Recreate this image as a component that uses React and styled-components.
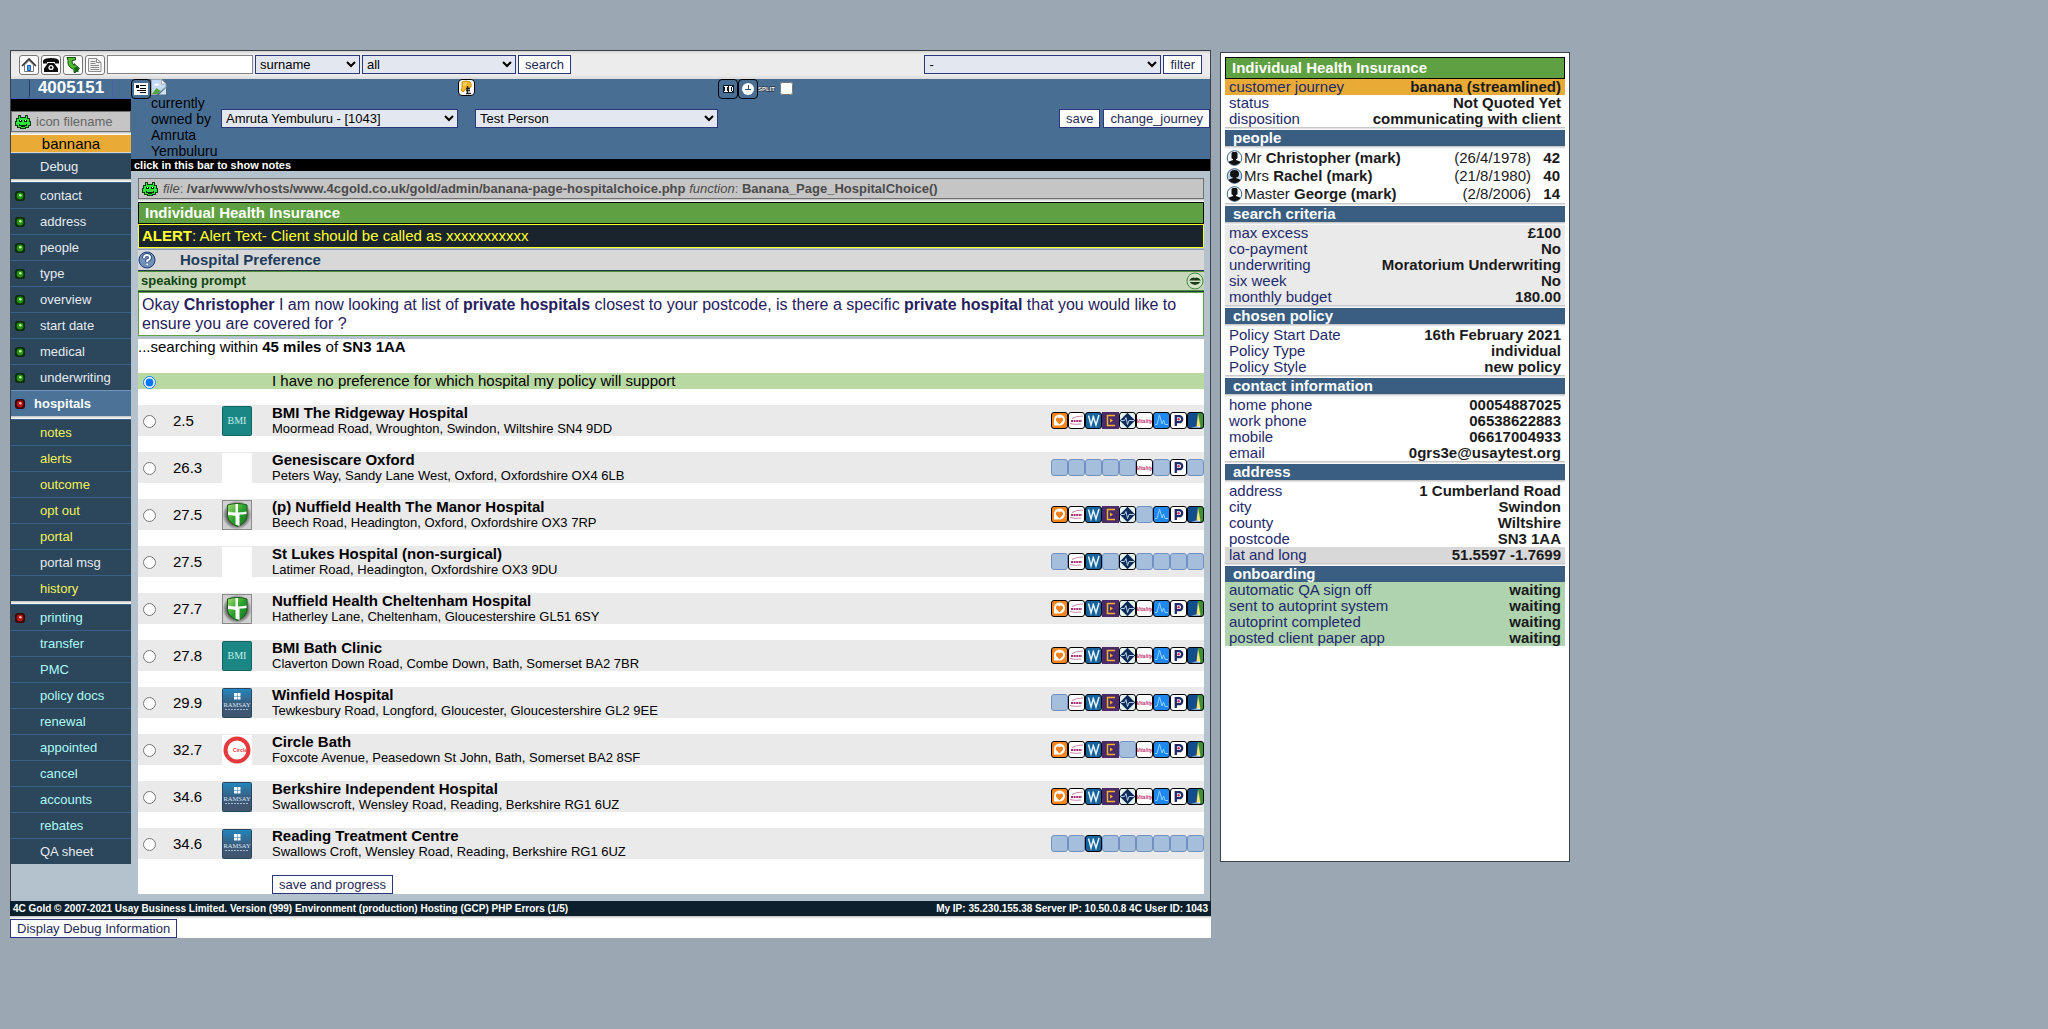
import React from 'react';
import styled, { createGlobalStyle, css } from 'styled-components';

const GlobalStyle = createGlobalStyle`
  * { box-sizing: border-box; }
  body {
    margin: 0;
    background: #9ba7b3;
    color: #000;
    font: 15px/16px "Liberation Sans", Arial, sans-serif;
  }
  ul, dl, dd, h1, h2, p { margin: 0; padding: 0; }
  ul { list-style: none; }
  svg { display: block; flex: none; }
`;

/* ---------- layout ---------- */

const Page = styled.div`
  display: flex;
  align-items: flex-start;
  gap: 9px;
  padding: 50px 10px 0;
`;

const MainColumn = styled.div`
  flex: 0 1 1201px;
  min-width: 0;
`;

const Frame = styled.div`
  border: 1px solid #3c4248;
  border-bottom: 0;
  background: #b4c2cd;
`;

const Workspace = styled.div`
  display: grid;
  grid-template-columns: 120px minmax(0, 1fr);
`;

const Divider = styled.div`
  height: 3px;
  background: linear-gradient(#bcbcbc, #f2f2f2 70%, #fff);
`;

/* ---------- controls ---------- */

const controlBase = css`
  height: 19px;
  border: 1px solid #2a377d;
  border-radius: 0;
  font: 13px/15px "Liberation Sans", Arial, sans-serif;
`;

const Button = styled.button`
  ${controlBase}
  padding: 0 6px;
  background: #fff;
  color: #1f2a55;
  white-space: nowrap;
`;

const Select = styled.select`
  ${controlBase}
  width: ${(p) => p.$width};
  padding: 0;
  background: #e3e8f0;
  color: #000;
`;

const TextBox = styled.input`
  ${controlBase}
  width: 146px;
  border-color: #858585;
  background: #fff;
`;

const Spacer = styled.span`
  flex: 1;
`;

const TopBar = styled.div`
  display: flex;
  align-items: center;
  gap: 2px;
  height: 28px;
  padding: 0 8px 1px;
  background: linear-gradient(#d2d2d2, #ececec 3px, #ececec 24px, #dadada);
`;

const IconButton = styled.button`
  display: grid;
  place-items: center;
  width: 20px;
  height: 20px;
  padding: 0;
  border: 1px solid #777;
  border-radius: 3px;
  background: #fdfdfd;
`;

/* ---------- left navigation ---------- */

const Reference = styled.div`
  display: flex;
  justify-content: space-between;
  height: 20px;
  background: #486f93;
  color: #fff;
  font-weight: bold;
  font-size: 17px;
  line-height: 18px;
  border-bottom: 1px solid #4460ac;
`;

const Notch = styled.span`
  width: 19px;
  border: 1px solid ${(p) => p.$color};
  border-width: ${(p) => p.$edges};
  border-radius: 3px;
`;

const BlackStrip = styled.div`
  height: 12px;
  background: #000;
`;

const FileTag = styled.div`
  display: flex;
  align-items: center;
  gap: 5px;
  height: 21px;
  padding: 0 3px;
  border: 1px solid #707070;
  background: #c5c5c5;
  color: #666;
  font-size: 13px;
  white-space: nowrap;

  b, i { color: #4b4b4b; }
`;

const Journey = styled.div`
  height: 18px;
  border-bottom: 1px solid #dcd8c8;
  background: #e9ab35;
  text-align: center;
  line-height: 18px;
`;

const tones = { plain: '#e4ebf0', yellow: '#f2f25a', cyan: '#adfaf6', active: '#fff' };

const NavLink = styled.a`
  display: flex;
  align-items: center;
  gap: ${(p) => (p.$tone === 'active' ? '8px' : '14px')};
  height: 26px;
  padding-left: 3px;
  border-top: 1px solid ${(p) => (p.$tone === 'active' ? '#6f95b8' : '#386088')};
  background: ${(p) => (p.$tone === 'active' ? '#4b7297' : '#2c465c')};
  color: ${(p) => tones[p.$tone]};
  font-size: 13px;
  font-weight: ${(p) => (p.$tone === 'active' ? 'bold' : 'normal')};
  text-decoration: none;
`;

const LightSlot = styled.span`
  width: 12px;
`;

/* ---------- client header ---------- */

const ClientHeader = styled.div`
  display: flex;
  height: 80px;
  background: #486f93;
`;

const Owner = styled.div`
  width: 70px;
  font-size: 14px;
  line-height: 16px;
`;

const HeaderSelect = styled.div`
  width: ${(p) => p.$width};
  padding-top: 30px;
`;

const HeaderIcons = styled.div`
  display: flex;
  align-items: flex-start;
`;

const SquareIcon = styled.button`
  display: grid;
  place-items: center;
  width: ${(p) => p.$size};
  height: ${(p) => p.$size};
  padding: 0;
  border: 1px solid #000;
  border-radius: 4px;
  background: ${(p) => p.$bg};
`;

const SplitCheck = styled.input`
  width: 13px;
  height: 13px;
  margin: 3px 4px;
`;

const HeaderActions = styled.div`
  display: flex;
  gap: 3px;
  margin-left: auto;
  padding-top: 30px;
`;

const NotesBar = styled.div`
  height: 12px;
  padding-left: 3px;
  background: #000;
  color: #fff;
  font-weight: bold;
  font-size: 11px;
  line-height: 12px;
`;

/* ---------- main content ---------- */

const Content = styled.main`
  padding: 7px 6px 7px 7px;
`;

const GreenTitle = styled.h1`
  height: 22px;
  padding-left: 6px;
  border: 1px solid #000;
  background: #5fa042;
  color: #fff;
  font-size: 15px;
  line-height: 20px;
`;

const Alert = styled.p`
  height: 24px;
  padding-left: 3px;
  border: 1px solid #ffff28;
  background: #1a242c;
  color: #ffff2e;
  line-height: 22px;
`;

const SectionTitle = styled.h2`
  display: flex;
  align-items: center;
  gap: 24px;
  height: 22px;
  margin-top: 1px;
  padding-bottom: 1px;
  border: solid #8d9bab;
  border-width: 1px 0;
  background: #d8d8d8;
  color: #203c5c;
  font-size: 15px;
`;

const PromptTitle = styled.div`
  display: flex;
  align-items: center;
  justify-content: space-between;
  height: 20px;
  margin-bottom: 1px;
  padding-left: 3px;
  border: solid #4f9038;
  border-width: 1px 0;
  box-shadow: 0 -1px #24384a, 0 1px #24384a;
  background: #c7d7ba;
  color: #0f4410;
  font-size: 13px;
  font-weight: bold;
`;

const Prompt = styled.p`
  padding: 2px 3px;
  border: 1px solid #5fa042;
  background: #fff;
  color: #26215c;
  font-size: 16px;
  line-height: 19px;
`;

const Results = styled.form`
  display: flex;
  flex-direction: column;
  align-items: stretch;
  gap: 16px;
  margin-top: 3px;
  background: #fff;
`;

const Searching = styled.p`
  height: 18px;
`;

const Row = styled.label`
  display: grid;
  grid-template-columns: 35px 49px 50px minmax(0, 1fr) auto;
  align-items: center;
  min-height: ${(p) => (p.$chosen ? '16px' : '31px')};
  background: ${(p) => (p.$chosen ? '#b8d9a2' : '#eaeaea')};
`;

const Radio = styled.input`
  width: 13px;
  height: 13px;
  margin: 2px 0 0 5px;
`;

const HospitalName = styled.b`
  display: block;
`;

const HospitalAddress = styled.span`
  display: block;
  font-size: 13px;
  line-height: 15px;
`;

const Providers = styled.span`
  display: flex;
`;

const SubmitRow = styled.div`
  padding-left: 134px;
`;

const Footer = styled.footer`
  display: flex;
  justify-content: space-between;
  height: 15px;
  padding: 0 3px;
  background: #0b1f2c;
  color: #fff;
  font-size: 10px;
  font-weight: bold;
  line-height: 15px;
`;

const DebugBar = styled.div`
  height: 19px;
  background: #fff;
`;

/* ---------- right summary ---------- */

const Summary = styled.aside`
  flex: 0 1 350px;
  min-width: 0;
  min-height: 810px;
  margin-top: 2px;
  padding: 4px;
  border: 1px solid #3c4248;
  background: #fff;
  color: #1a1a1a;
`;

const GroupTitle = styled.h2`
  height: 16px;
  padding-left: 8px;
  background: #395e82;
  color: #fff;
  font-size: 15px;
  line-height: 16px;
`;

const Facts = styled.dl`
  background: ${(p) => p.$bg};
`;

const Fact = styled.div`
  display: flex;
  justify-content: space-between;
  padding: 0 4px;
  background: ${(p) => p.$bg};

  dt { color: #1f2a6c; }
  dd { font-weight: bold; }
`;

const Person = styled.li`
  display: grid;
  grid-template-columns: 18px minmax(0, 1fr) auto 29px;
  align-items: center;
  height: 18px;
  padding: 0 5px 0 1px;

  strong:last-child { text-align: right; }
`;

/* ---------- drawings ---------- */

const Invader = () => (
  <svg width="16" height="14" viewBox="0 0 16 14" shapeRendering="crispEdges">
    <path fill="#0a3d10" d="M3 0h3v2h4V0h3v3h2v3h1v5h-2v2h-3v1H5v-1H2v-2H0V6h1V3h2z" />
    <path fill="#2fe23c" d="M4 1h1v2h6V1h1v3h2v3h1v3h-2v2h-3v1H6v-1H3v-2H1V7h1V4h2z" />
    <path fill="#06240a" d="M4 5h3v2H4zM9 5h3v2H9zM4 9h1v1h6V9h1v2h-2v1H6v-1H4z" />
    <path fill="#fff" d="M5 5h1v1H5zM10 5h1v1h-1z" />
  </svg>
);

const Light = ({ color }) => {
  const [dark, mid, hi] = color === 'red' ? ['#3a0505', '#b01818', '#ffb0b0'] : ['#0b2c08', '#2a8f18', '#b8ff90'];
  return (
    <svg width="12" height="12" viewBox="0 0 12 12">
      <rect x="1" y="1" width="10" height="10" rx="3" fill={dark} />
      <circle cx="6" cy="6" r="3.4" fill={mid} />
      <circle cx="6.3" cy="5.3" r="1.3" fill={hi} />
    </svg>
  );
};

const HomeIcon = () => (
  <svg width="16" height="16" viewBox="0 0 16 16">
    <path d="M3.500 8v6.500h9V8L8 3.500z" fill="#fff" stroke="#777" />
    <path d="M1 9l7-7 7 7" fill="none" stroke="#333" strokeWidth="1.600" />
    <path d="M6.500 13.500v-5h3v5z" fill="#49a0ee" stroke="#2060b8" />
  </svg>
);

const PhoneIcon = () => (
  <svg width="18" height="16" viewBox="0 0 18 16">
    <path d="M1 6.500V4q.500-3 8-3t8 3v2.500h-4V5H5v1.500zM6 6h6l4 5.500V15H2v-3.500z" fill="#0c0c0c" />
    <circle cx="9" cy="10.500" r="2.600" fill="#fff" />
    <circle cx="9" cy="10.500" r="1.200" fill="#0c0c0c" />
  </svg>
);

const ArrowIcon = () => (
  <svg width="16" height="17" viewBox="0 0 16 17">
    <path d="M2 1.500h8.500V4L7 4.500q-.500 3 2 5V7.500l5.500 5-4 4H9v-3Q2 11 3 4.500z" fill="#52bd34" stroke="#14500c" />
    <path d="M9.500 11h4v5h-4z" fill="#126a14" />
  </svg>
);

const PageIcon = () => (
  <svg width="16" height="16" viewBox="0 0 16 16">
    <path d="M1.500 1.500h8l4.500 4v9H1.500z" fill="#f0f0f0" stroke="#8c8c8c" />
    <path d="M9.500 1.500v4H14" fill="none" stroke="#8c8c8c" />
    <path d="M3.500 4.500h5M3.500 6.500h5M3.500 8.500h8.500M3.500 10.500h8.500M3.500 12.500h8.500" stroke="#888" />
  </svg>
);

const CardIcon = () => (
  <svg width="14" height="12" viewBox="0 0 14 12" shapeRendering="crispEdges">
    <path d="M0 0h14v12H0z" fill="#fff" />
    <path d="M2 2h3v3H2zM6 2h6v1H6zM6 5h6v1H6zM3 7h9v1H3zM6 9h6v1H6z" fill="#000" />
  </svg>
);

const BrokenImage = () => (
  <svg width="16" height="16" viewBox="0 0 16 16">
    <path d="M.500.500h10l4.500 4.500v3L5 15.500H.500z" fill="#c4d9f6" stroke="#9aa5ad" />
    <path d="M1 15l4.500-6 4 3L6 15z" fill="#4fa73b" />
    <path d="M3 6q1-2 3-1.500 2 0 2 2H3z" fill="#fff" />
    <path d="M10.500.500V5H15z" fill="#fff" stroke="#aaa" />
    <path d="M15 9v6.500H8z" fill="#d6dfe6" />
  </svg>
);

const KeyIcon = () => (
  <svg width="15" height="15" viewBox="0 0 15 15">
    <path d="M3 2q4-2 8 0 2 2 1 5L8 8l-4 4-2-2 1-2z" fill="#f2b824" stroke="#c8900f" />
    <path d="M4 3h4M4 5h3" stroke="#fbe08a" />
    <path d="M8.500 6v8M7 8.500h4M7 10.500h4M7 13.500h5" stroke="#222" strokeWidth="1.300" />
  </svg>
);

const IdIcon = () => (
  <svg width="16" height="16" viewBox="0 0 16 16" shapeRendering="crispEdges">
    <path d="M3 4h11v8H3z" fill="#0a141e" />
    <path d="M4 5h4v1H7v4h1v1H4v-1h1V6H4zM9 5h3v1h1v4h-1v1H9z" fill="#fff" />
    <path d="M11 6h1v4h-1z" fill="#0a141e" />
  </svg>
);

const ClockIcon = () => (
  <svg width="14" height="14" viewBox="0 0 14 14">
    <circle cx="7" cy="7" r="6" fill="#fff" />
    <path d="M7.500 3v5M4 7.500h6" stroke="#35556f" />
  </svg>
);

const SplitIcon = () => (
  <svg width="18" height="16" viewBox="0 0 18 16">
    <text x="0" y="12" fontFamily="Liberation Sans, Arial, sans-serif" fontSize="6" fontWeight="bold" fill="#fff" stroke="#222" strokeWidth="1" paintOrder="stroke">SPLIT</text>
  </svg>
);

const HelpIcon = () => (
  <svg width="18" height="18" viewBox="0 0 18 18">
    <circle cx="9" cy="9" r="8" fill="#7191b8" stroke="#1f3c78" />
    <path d="M6 7q0-3 3-3t3 2.700Q12 8.300 9.200 9.500v1.500" fill="none" stroke="#1f3c78" strokeWidth="3.600" />
    <path d="M6 7q0-3 3-3t3 2.700Q12 8.300 9.200 9.500v1.500" fill="none" stroke="#fff" strokeWidth="2" />
    <circle cx="9.200" cy="13.500" r="1.400" fill="#fff" stroke="#1f3c78" strokeWidth=".5" />
  </svg>
);

const LipsIcon = () => (
  <svg width="18" height="18" viewBox="0 0 18 18">
    <circle cx="9" cy="9" r="8" fill="#d3e3c8" stroke="#3f8a38" />
    <path d="M3 8.500q3-4 6-2.500 3-1.500 6 2.500zM3.500 10h11Q12 13 9 13t-5.500-3z" fill="#1c3c18" />
  </svg>
);

const PersonIcon = ({ female }) => (
  <svg width="17" height="16" viewBox="0 0 17 16">
    <circle cx="8.500" cy="8" r="7.300" fill={female ? '#bcd6ea' : '#f4f9fd'} stroke="#3f6486" />
    {female
      ? <path d="M4 6q0-4 4.500-4T13 6q0 3-2.500 3.500h-4Q4 9 4 6z" fill="#111" />
      : <rect x="5.500" y="2" width="6" height="7" rx="1.500" fill="#111" />}
    <path d="M7 8h3v2l4 1.500v1.300Q8.500 17.500 3 12.800v-1.300L7 10z" fill="#111" />
  </svg>
);

const HospitalLogo = ({ kind }) => {
  if (kind === 'bmi') {
    return (
      <svg width="30" height="30" viewBox="0 0 30 30">
        <rect x=".500" y=".500" width="29" height="29" rx="1" fill="#1b8784" stroke="#126462" />
        <text x="15" y="18" textAnchor="middle" fontFamily="Liberation Serif, serif" fontSize="10" fill="#c4efec">BMI</text>
      </svg>
    );
  }
  if (kind === 'nuffield') {
    return (
      <svg width="30" height="30" viewBox="0 0 30 30">
        <defs>
          <radialGradient id="shade"><stop offset=".6" stopColor="#3c3c3c" /><stop offset="1" stopColor="#d0d0d0" /></radialGradient>
          <linearGradient id="shield" x2="1" y2="1"><stop stopColor="#a4e070" /><stop offset=".5" stopColor="#2ba02c" /><stop offset="1" stopColor="#147820" /></linearGradient>
        </defs>
        <rect x=".500" y=".500" width="29" height="29" fill="url(#shade)" stroke="#8a8a8a" />
        <path d="M5.500 5q5-1.500 10-1.500T25 5v11q-1 7-9.500 10.500Q6.500 23 5.500 16z" fill="url(#shield)" stroke="#1c5c1c" />
        <path d="M6 11.500q4 1 7.500 1V4h2.500v8.500q4 0 8.500-1V14q-4 .500-7 .500V26l-4-1.500V16Q10 15 6 15z" fill="#fff" />
      </svg>
    );
  }
  if (kind === 'ramsay') {
    return (
      <svg width="30" height="30" viewBox="0 0 30 30">
        <defs>
          <linearGradient id="dusk" x2="0" y2="1"><stop stopColor="#2487bd" /><stop offset=".55" stopColor="#3a5a7c" /><stop offset="1" stopColor="#42546c" /></linearGradient>
        </defs>
        <rect x=".500" y=".500" width="29" height="29" rx="1" fill="url(#dusk)" stroke="#28465e" />
        <path d="M12 5h3v3h-3zM15.500 5h3v3h-3zM12 8.500h3v3h-3zM15.500 8.500h3v3h-3z" fill="#f4faff" />
        <text x="15" y="19" textAnchor="middle" fontFamily="Liberation Serif, serif" fontSize="6.500" fill="#dce8f4">RAMSAY</text>
        <path d="M3 21.500h24" stroke="#a8b8c8" strokeDasharray="2 1" />
      </svg>
    );
  }
  return (
    <svg width="30" height="30" viewBox="0 0 30 30">
      <rect width="30" height="30" rx="1" fill="#fff" />
      {kind === 'circle' && (
        <>
          <circle cx="15" cy="15" r="11.500" fill="#fff" stroke="#e43a3c" strokeWidth="4" />
          <text x="18" y="17" textAnchor="middle" fontFamily="Liberation Sans, sans-serif" fontSize="5" fontWeight="bold" fill="#e43a3c">Circle</text>
        </>
      )}
    </svg>
  );
};

const providerArt = [
  { bg: '#f5861f', art: <><path d="M3 8a5.500 5.500 0 1 1 5.500 5.500H3z" fill="#fff" /><path d="M8.500 12.500L5 8.800Q4.500 5.600 6.800 5.400q1.200 0 1.700 1.200.500-1.200 1.700-1.200 2.300.200 1.800 3.400z" fill="#f0801c" /></> },
  { bg: '#fff', art: <><path d="M4 6.500Q8 4 15 4M2 11.500q5 1.500 11 .500" fill="none" stroke="#c98aac" /><path d="M3 9h11" stroke="#a83070" strokeWidth="1.800" strokeDasharray="2 .6" /></> },
  { bg: '#17649c', art: <><path d="M3.500 3.500L6 13 8.500 4M8 3.500l3 9.500 3-10" fill="none" stroke="#e4f2fb" strokeWidth="1.500" /></> },
  { bg: '#4a2a68', square: true, art: <><path d="M13 3.500H5.500v10H13" fill="none" stroke="#f0b428" strokeWidth="1.500" /><path d="M8 6.500l3 2-3 2z" fill="#f0b428" /></> },
  { bg: '#e6f4ee', art: <><path d="M8.500.800l7.700 7.700-7.700 7.700L.800 8.500z" fill="#0e2a58" /><path d="M2 8.500h3.500l1.500-3 1.500 7 1.500-4H15" fill="none" stroke="#c4e0f0" strokeWidth=".9" /></> },
  { bg: '#fff', art: <text x="8.500" y="11" textAnchor="middle" fontFamily="Liberation Sans, sans-serif" fontSize="5" fontWeight="bold" fontStyle="italic" fill="#c2306c">Vitality</text> },
  { bg: '#1e88f0', art: <path d="M2 12.500h2L6.500 3l2.500 9 1.500-4 1.500 4.500h3" fill="none" stroke="#8fd0ff" /> },
  { bg: '#fff', art: <><path d="M5.800 14V4.200h3.400a3 3 0 0 1 0 6H6" fill="none" stroke="#1e2a66" strokeWidth="2.300" /><circle cx="8.600" cy="7.200" r="1.300" fill="#d03060" /></> },
  { bg: '#124e8c', art: <><path d="M11 1h5v15h-3z" fill="#3c9038" /><path d="M11 1.500l2.500 13H9.500z" fill="#f0e46c" /><path d="M4 15.500l9-1.500v1.500z" fill="#fff" /></> },
];

const Provider = ({ index, covered }) => {
  const item = providerArt[index];
  return (
    <svg width="17" height="17" viewBox="0 0 17 17">
      {covered ? (
        <>
          <rect x=".500" y=".500" width="16" height="16" rx={item.square ? 0 : 2.5} fill={item.bg} />
          {item.art}
          <rect x=".500" y=".500" width="16" height="16" rx={item.square ? 0 : 2.5} fill="none" stroke={item.square ? item.bg : '#000'} />
        </>
      ) : (
        <rect x=".500" y=".500" width="16" height="16" rx="2.500" fill="#a5bedb" stroke="#7390c4" />
      )}
    </svg>
  );
};

/* ---------- data ---------- */

const navGroups = [
  [
    ['contact', 'plain', 'green'], ['address', 'plain', 'green'], ['people', 'plain', 'green'],
    ['type', 'plain', 'green'], ['overview', 'plain', 'green'], ['start date', 'plain', 'green'],
    ['medical', 'plain', 'green'], ['underwriting', 'plain', 'green'], ['hospitals', 'active', 'red'],
  ],
  [
    ['notes', 'yellow'], ['alerts', 'yellow'], ['outcome', 'yellow'], ['opt out', 'yellow'],
    ['portal', 'yellow'], ['portal msg', 'plain'], ['history', 'yellow'],
  ],
  [
    ['printing', 'cyan', 'red'], ['transfer', 'cyan'], ['PMC', 'cyan'], ['policy docs', 'cyan'],
    ['renewal', 'cyan'], ['appointed', 'cyan'], ['cancel', 'cyan'], ['accounts', 'cyan'],
    ['rebates', 'cyan'], ['QA sheet', 'plain'],
  ],
];

const hospitals = [
  ['2.5', 'bmi', 'BMI The Ridgeway Hospital', 'Moormead Road, Wroughton, Swindon, Wiltshire SN4 9DD', '111111111'],
  ['26.3', 'blank', 'Genesiscare Oxford', 'Peters Way, Sandy Lane West, Oxford, Oxfordshire OX4 6LB', '000001010'],
  ['27.5', 'nuffield', '(p) Nuffield Health The Manor Hospital', 'Beech Road, Headington, Oxford, Oxfordshire OX3 7RP', '111110111'],
  ['27.5', 'blank', 'St Lukes Hospital (non-surgical)', 'Latimer Road, Headington, Oxfordshire OX3 9DU', '011010000'],
  ['27.7', 'nuffield', 'Nuffield Health Cheltenham Hospital', 'Hatherley Lane, Cheltenham, Gloucestershire GL51 6SY', '111111111'],
  ['27.8', 'bmi', 'BMI Bath Clinic', 'Claverton Down Road, Combe Down, Bath, Somerset BA2 7BR', '111111111'],
  ['29.9', 'ramsay', 'Winfield Hospital', 'Tewkesbury Road, Longford, Gloucester, Gloucestershire GL2 9EE', '011111111'],
  ['32.7', 'circle', 'Circle Bath', 'Foxcote Avenue, Peasedown St John, Bath, Somerset BA2 8SF', '111101111'],
  ['34.6', 'ramsay', 'Berkshire Independent Hospital', 'Swallowscroft, Wensley Road, Reading, Berkshire RG1 6UZ', '111111111'],
  ['34.6', 'ramsay', 'Reading Treatment Centre', 'Swallows Croft, Wensley Road, Reading, Berkshire RG1 6UZ', '001000000'],
];

const people = [
  ['Mr', 'Christopher (mark)', '(26/4/1978)', '42', false],
  ['Mrs', 'Rachel (mark)', '(21/8/1980)', '40', true],
  ['Master', 'George (mark)', '(2/8/2006)', '14', false],
];

const factGroups = [
  { title: 'search criteria', bg: '#eaeaea', rows: [['max excess', '£100'], ['co-payment', 'No'], ['underwriting', 'Moratorium Underwriting'], ['six week', 'No'], ['monthly budget', '180.00']] },
  { title: 'chosen policy', rows: [['Policy Start Date', '16th February 2021'], ['Policy Type', 'individual'], ['Policy Style', 'new policy']] },
  { title: 'contact information', rows: [['home phone', '00054887025'], ['work phone', '06538622883'], ['mobile', '06617004933'], ['email', '0grs3e@usaytest.org']] },
  { title: 'address', rows: [['address', '1 Cumberland Road'], ['city', 'Swindon'], ['county', 'Wiltshire'], ['postcode', 'SN3 1AA'], ['lat and long', '51.5597 -1.7699', '#d8d8d8']] },
  { title: 'onboarding', bg: '#aed3ae', tight: true, rows: [['automatic QA sign off', 'waiting'], ['sent to autoprint system', 'waiting'], ['autoprint completed', 'waiting'], ['posted client paper app', 'waiting']] },
];

/* ---------- sections ---------- */

const SearchBar = () => (
  <TopBar>
    <IconButton aria-label="home"><HomeIcon /></IconButton>
    <IconButton aria-label="phone"><PhoneIcon /></IconButton>
    <IconButton aria-label="return"><ArrowIcon /></IconButton>
    <IconButton aria-label="document"><PageIcon /></IconButton>
    <TextBox type="text" aria-label="search text" />
    <Select $width="105px" aria-label="search field"><option>surname</option></Select>
    <Select $width="154px" aria-label="search scope"><option>all</option></Select>
    <Button>search</Button>
    <Spacer />
    <Select $width="237px" aria-label="filter by"><option>-</option></Select>
    <Button>filter</Button>
  </TopBar>
);

const Navigation = () => (
  <nav>
    <Reference>
      <Notch $color="#24406c" $edges="0 1px 0 0" />
      4005151
      <Notch $color="#4460ac" $edges="0 0 0 1px" />
    </Reference>
    <BlackStrip />
    <FileTag><Invader />icon filename</FileTag>
    <Divider />
    <Journey>bannana</Journey>
    <NavLink href="#debug" $tone="plain"><LightSlot />Debug</NavLink>
    {navGroups.map((group) => (
      <div key={group[0][0]}>
        <Divider />
        {group.map(([label, tone, light]) => (
          <NavLink key={label} href={`#${label}`} $tone={tone}>
            <LightSlot>{light && <Light color={light} />}</LightSlot>
            {label}
          </NavLink>
        ))}
      </div>
    ))}
  </nav>
);

const Client = () => (
  <>
    <ClientHeader>
      <HeaderIcons>
        <SquareIcon $size="20px" $bg="transparent" aria-label="card"><CardIcon /></SquareIcon>
      </HeaderIcons>
      <Owner><BrokenImage />currently owned by Amruta Yembuluru</Owner>
      <HeaderSelect $width="237px">
        <Select $width="100%" aria-label="owner"><option>Amruta Yembuluru - [1043]</option></Select>
      </HeaderSelect>
      <HeaderIcons>
        <SquareIcon $size="17px" $bg="#fff" aria-label="key"><KeyIcon /></SquareIcon>
      </HeaderIcons>
      <HeaderSelect $width="243px">
        <Select $width="100%" aria-label="person"><option>Test Person</option></Select>
      </HeaderSelect>
      <HeaderIcons>
        <SquareIcon $size="20px" $bg="transparent" aria-label="id"><IdIcon /></SquareIcon>
        <SquareIcon $size="20px" $bg="transparent" aria-label="clock"><ClockIcon /></SquareIcon>
        <SplitIcon />
        <SplitCheck type="checkbox" aria-label="split" />
      </HeaderIcons>
      <HeaderActions>
        <Button>save</Button>
        <Button>change_journey</Button>
      </HeaderActions>
    </ClientHeader>
    <NotesBar>click in this bar to show notes</NotesBar>
  </>
);

const HospitalChoice = () => (
  <Content>
    <FileTag>
      <Invader />
      <span>
        <i>file</i>: <b>/var/www/vhosts/www.4cgold.co.uk/gold/admin/banana-page-hospitalchoice.php</b>{' '}
        <i>function</i>: <b>Banana_Page_HospitalChoice()</b>
      </span>
    </FileTag>
    <Divider />
    <GreenTitle>Individual Health Insurance</GreenTitle>
    <Alert><b>ALERT</b>: Alert Text- Client should be called as xxxxxxxxxxx</Alert>
    <SectionTitle><HelpIcon />Hospital Preference</SectionTitle>
    <PromptTitle>speaking prompt<LipsIcon /></PromptTitle>
    <Prompt>
      Okay <b>Christopher</b> I am now looking at list of <b>private hospitals</b> closest to your postcode, is
      there a specific <b>private hospital</b> that you would like to ensure you are covered for ?
    </Prompt>
    <Results onSubmit={(e) => e.preventDefault()}>
      <Searching>...searching within <b>45 miles</b> of <b>SN3 1AA</b></Searching>
      <Row $chosen>
        <Radio type="radio" name="hospital" defaultChecked />
        <span />
        <span />
        <span>I have no preference for which hospital my policy will support</span>
      </Row>
      {hospitals.map(([miles, logo, name, address, cover]) => (
        <Row key={name}>
          <Radio type="radio" name="hospital" />
          <span>{miles}</span>
          <HospitalLogo kind={logo} />
          <span>
            <HospitalName>{name}</HospitalName>
            <HospitalAddress>{address}</HospitalAddress>
          </span>
          <Providers>
            {[...cover].map((c, i) => <Provider key={i} index={i} covered={c === '1'} />)}
          </Providers>
        </Row>
      ))}
      <SubmitRow><Button>save and progress</Button></SubmitRow>
    </Results>
  </Content>
);

const ClientSummary = () => (
  <Summary>
    <GreenTitle as="h2">Individual Health Insurance</GreenTitle>
    <Facts>
      <Fact $bg="#e9ab35"><dt>customer journey</dt><dd>banana (streamlined)</dd></Fact>
      <Fact><dt>status</dt><dd>Not Quoted Yet</dd></Fact>
      <Fact><dt>disposition</dt><dd>communicating with client</dd></Fact>
    </Facts>
    <Divider />
    <GroupTitle>people</GroupTitle>
    <Divider />
    <ul>
      {people.map(([prefix, name, born, age, female]) => (
        <Person key={name}>
          <PersonIcon female={female} />
          <span>{prefix} <strong>{name}</strong></span>
          <span>{born}</span>
          <strong>{age}</strong>
        </Person>
      ))}
    </ul>
    {factGroups.map(({ title, bg, tight, rows }) => (
      <section key={title}>
        <Divider />
        <GroupTitle>{title}</GroupTitle>
        {!tight && <Divider />}
        <Facts $bg={bg}>
          {rows.map(([label, value, rowBg]) => (
            <Fact key={label} $bg={rowBg}><dt>{label}</dt><dd>{value}</dd></Fact>
          ))}
        </Facts>
      </section>
    ))}
  </Summary>
);

export default function App() {
  return (
    <>
      <GlobalStyle />
      <Page>
        <MainColumn>
          <Frame>
            <SearchBar />
            <Workspace>
              <Navigation />
              <div>
                <Client />
                <HospitalChoice />
              </div>
            </Workspace>
          </Frame>
          <Footer>
            <span>4C Gold © 2007-2021 Usay Business Limited. Version (999) Environment (production) Hosting (GCP) PHP Errors (1/5)</span>
            <span>My IP: 35.230.155.38 Server IP: 10.50.0.8 4C User ID: 1043</span>
          </Footer>
          <Divider />
          <DebugBar><Button>Display Debug Information</Button></DebugBar>
        </MainColumn>
        <ClientSummary />
      </Page>
    </>
  );
}
